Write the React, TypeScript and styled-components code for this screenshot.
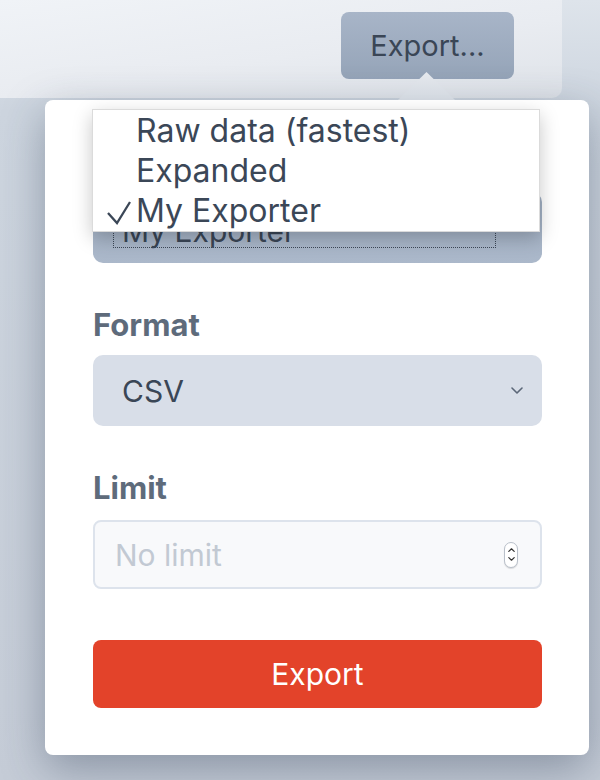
import React from "react";
import styled, { createGlobalStyle } from "styled-components";

const Global = createGlobalStyle`
  html, body { margin: 0; padding: 0; }
  body {
    width: 600px;
    height: 780px;
    overflow: hidden;
    background: #c8d0da;
    font-family: Inter, "Noto Sans", sans-serif;
  }
`;

const Page = styled.div`
  width: 600px;
  height: 780px;
  overflow: hidden;
  display: flex;
  flex-direction: column;
  background: linear-gradient(180deg, #dee4eb 0px, #cdd5df 110px, #c5ccd7 780px);
`;

const TopBar = styled.header`
  width: 562px;
  height: 98px;
  box-sizing: border-box;
  padding: 12px 48px 0 0;
  display: flex;
  justify-content: flex-end;
  align-items: flex-start;
  background: linear-gradient(172deg, #f0f3f7 0%, #e9ecf1 55%, #dfe3e9 100%);
  border-bottom-right-radius: 10px;
`;

const TriggerButton = styled.button`
  width: 173px;
  height: 67px;
  padding: 0;
  border: 0;
  border-radius: 8px;
  background: linear-gradient(180deg, #a8b5c8 0%, #95a4b8 100%);
  color: #3a4656;
  font: 400 29px/1 Inter, "Noto Sans", sans-serif;
`;

const Popover = styled.section`
  position: relative;
  margin: 2px 0 0 45px;
  width: 544px;
  height: 655px;
  box-sizing: border-box;
  padding: 44px 47px 47px 48px;
  display: flex;
  flex-direction: column;
  gap: 44px;
  background: #ffffff;
  border-radius: 8px;
  box-shadow: 0 14px 44px rgba(40, 55, 78, 0.38);
`;

const Caret = styled.div`
  position: absolute;
  top: -28px;
  left: 353px;
  width: 57px;
  height: 28px;
  background: linear-gradient(180deg, #e6e9ee 0%, #d2d8e0 100%);
  clip-path: polygon(50% 0, 100% 100%, 0 100%);
`;

const Group = styled.div`
  display: flex;
  flex-direction: column;
`;

const Label = styled.label<{ $gap?: number }>`
  display: block;
  height: 36px;
  margin-bottom: ${(p) => p.$gap ?? 12}px;
  font: 700 31px/36px Inter, "Noto Sans", sans-serif;
  color: #5e6b7b;
`;

const Select = styled.div<{ $active?: boolean }>`
  position: relative;
  height: 71px;
  box-sizing: border-box;
  display: flex;
  align-items: center;
  border-radius: 10px;
  padding: ${(p) => (p.$active ? "15px 19px 15px 20px" : "0 19px 0 29px")};
  background: ${(p) =>
    p.$active ? "linear-gradient(180deg, #9faec2 0%, #abb8ca 100%)" : "#d8dee8"};
  color: #3a4656;
  font: 400 30px/1 Inter, "Noto Sans", sans-serif;
`;

const SelectValue = styled.span`
  flex: 1;
`;

const FocusRing = styled.div`
  flex: 1;
  align-self: stretch;
  margin-right: 15px;
  padding: 6px 0 0 8px;
  display: flex;
  align-items: center;
  border: 1px dotted #3c4756;
`;

const Menu = styled.ul`
  position: absolute;
  top: -83px;
  left: -1px;
  width: 448px;
  box-sizing: border-box;
  margin: 0;
  padding: 1px 0 0;
  list-style: none;
  background: #ffffff;
  border: 1px solid rgba(0, 0, 0, 0.14);
  box-shadow: 0 6px 18px rgba(0, 0, 0, 0.22);
  z-index: 2;
`;

const MenuItem = styled.li`
  height: 40px;
  display: grid;
  grid-template-columns: 43px 1fr;
  align-items: center;
  color: #3b4757;
  font: 400 32px/40px Inter, "Noto Sans", sans-serif;
`;

const CheckSlot = styled.span`
  display: flex;
  align-items: center;
  padding-left: 13px;
`;

const NumberField = styled.div`
  height: 69px;
  box-sizing: border-box;
  display: flex;
  align-items: center;
  padding: 0 22px 0 20px;
  border: 2px solid #dde3ec;
  border-radius: 8px;
  background: #f8f9fb;
`;

const NumberInput = styled.input`
  flex: 1;
  min-width: 0;
  border: 0;
  padding: 0;
  outline: none;
  background: transparent;
  color: #3a4656;
  font: 400 30px/1 Inter, "Noto Sans", sans-serif;
  &::placeholder {
    color: #c2c9d3;
  }
`;

const Stepper = styled.span`
  width: 14px;
  height: 26px;
  box-sizing: border-box;
  display: flex;
  flex-direction: column;
  align-items: center;
  justify-content: center;
  gap: 5px;
  border: 1px solid #b9c0ca;
  border-radius: 7px;
  background: #ffffff;
  box-shadow: 0 1px 1px rgba(0, 0, 0, 0.12);
`;

const SubmitButton = styled.button`
  margin-top: 7px;
  height: 68px;
  border: 0;
  border-radius: 8px;
  background: #e3432a;
  color: #ffffff;
  font: 400 30px/1 Inter, "Noto Sans", sans-serif;
`;

const Chevron = () => (
  <svg width="12" height="7" viewBox="0 0 12 7" aria-hidden>
    <polyline points="1,1 6,6 11,1" fill="none" stroke="#5b6778" strokeWidth="1.6" strokeLinecap="round" strokeLinejoin="round" />
  </svg>
);

const Check = () => (
  <svg width="26" height="28" viewBox="0 0 26 28" aria-hidden>
    <polyline points="2,16 11,26 24,5" fill="none" stroke="#3b4757" strokeWidth="2.3" strokeLinejoin="miter" />
  </svg>
);

const SmallArrow = ({ up }: { up?: boolean }) => (
  <svg width="7" height="4" viewBox="0 0 7 4" aria-hidden>
    <polyline
      points={up ? "0.8,3.4 3.5,0.8 6.2,3.4" : "0.8,0.6 3.5,3.2 6.2,0.6"}
      fill="none"
      stroke="#333"
      strokeWidth="1.2"
      strokeLinecap="round"
      strokeLinejoin="round"
    />
  </svg>
);

const options = [
  { label: "Raw data (fastest)", selected: false },
  { label: "Expanded", selected: false },
  { label: "My Exporter", selected: true },
];

export default function App() {
  return (
    <Page>
      <Global />
      <TopBar>
        <TriggerButton>Export...</TriggerButton>
      </TopBar>
      <Popover>
        <Caret />
        <Group>
          <Label>Exporter</Label>
          <Select $active>
            <FocusRing>My Exporter</FocusRing>
            <Chevron />
            <Menu>
              {options.map((o) => (
                <MenuItem key={o.label}>
                  <CheckSlot>{o.selected ? <Check /> : null}</CheckSlot>
                  <span>{o.label}</span>
                </MenuItem>
              ))}
            </Menu>
          </Select>
        </Group>
        <Group>
          <Label>Format</Label>
          <Select>
            <SelectValue>CSV</SelectValue>
            <Chevron />
          </Select>
        </Group>
        <Group>
          <Label $gap={14}>Limit</Label>
          <NumberField>
            <NumberInput placeholder="No limit" />
            <Stepper>
              <SmallArrow up />
              <SmallArrow />
            </Stepper>
          </NumberField>
        </Group>
        <SubmitButton>Export</SubmitButton>
      </Popover>
    </Page>
  );
}
